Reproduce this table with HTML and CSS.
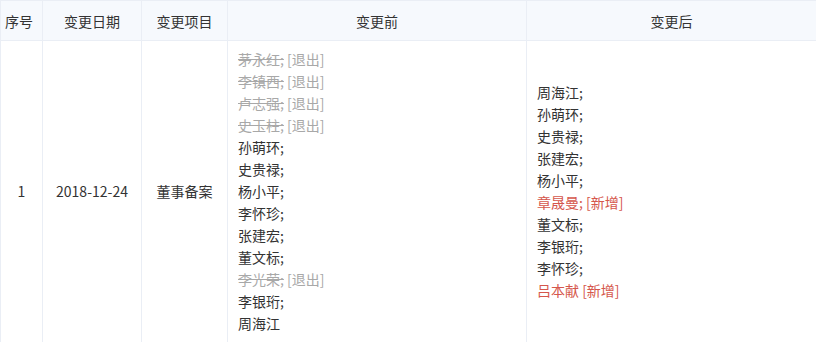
FILE: index.html
```html
<!DOCTYPE html>
<html lang="zh-CN">
<head>
<meta charset="utf-8">
<title>变更记录</title>
<link rel="stylesheet" href="styles.css">
</head>
<body>
<table class="change-table">
  <colgroup>
    <col class="c-no">
    <col class="c-date">
    <col class="c-item">
    <col class="c-before">
    <col class="c-after">
  </colgroup>
  <thead>
    <tr>
      <th class="no">序号</th>
      <th>变更日期</th>
      <th>变更项目</th>
      <th>变更前</th>
      <th>变更后</th>
    </tr>
  </thead>
  <tbody>
    <tr>
      <td class="center no">1</td>
      <td class="center">2018-12-24</td>
      <td class="center">董事备案</td>
      <td class="list">
        <div class="line out"><span class="del">茅永红;</span> [退出]</div>
        <div class="line out"><span class="del">李镇西;</span> [退出]</div>
        <div class="line out"><span class="del">卢志强;</span> [退出]</div>
        <div class="line out"><span class="del">史玉柱;</span> [退出]</div>
        <div class="line">孙萌环;</div>
        <div class="line">史贵禄;</div>
        <div class="line">杨小平;</div>
        <div class="line">李怀珍;</div>
        <div class="line">张建宏;</div>
        <div class="line">董文标;</div>
        <div class="line out"><span class="del">李光荣;</span> [退出]</div>
        <div class="line">李银珩;</div>
        <div class="line">周海江</div>
      </td>
      <td class="list">
        <div class="line">周海江;</div>
        <div class="line">孙萌环;</div>
        <div class="line">史贵禄;</div>
        <div class="line">张建宏;</div>
        <div class="line">杨小平;</div>
        <div class="line add">章晟曼; [新增]</div>
        <div class="line">董文标;</div>
        <div class="line">李银珩;</div>
        <div class="line">李怀珍;</div>
        <div class="line add">吕本献 [新增]</div>
      </td>
    </tr>
  </tbody>
</table>
</body>
</html>
```

FILE: styles.css
```css
html, body {
  margin: 0;
  padding: 0;
  background: #fff;
}
body {
  font-family: "Noto Sans CJK SC", "Noto Sans", sans-serif;
  font-size: 14px;
  color: #333;
}
.change-table {
  width: 816px;
  border-collapse: collapse;
  table-layout: fixed;
}
.c-no { width: 42px; }
.c-date { width: 99px; }
.c-item { width: 86px; }
.c-before { width: 299px; }
.c-after { width: 290px; }
.change-table th,
.change-table td {
  border: 1px solid #eaeef5;
  line-height: 22px;
}
.change-table th {
  background: #f6f9fd;
  font-weight: normal;
  height: 39px;
  padding: 0;
  text-align: center;
  vertical-align: middle;
}
.change-table td {
  padding: 7px 10px 9px;
  vertical-align: middle;
}
.change-table td.center {
  text-align: center;
  padding: 7px 0 9px;
}
.change-table .no {
  padding-right: 5px;
}
.line {
  white-space: nowrap;
}
.out {
  color: #a8a8a8;
}
.del {
  text-decoration: line-through;
}
.add {
  color: #d5574c;
}
```
